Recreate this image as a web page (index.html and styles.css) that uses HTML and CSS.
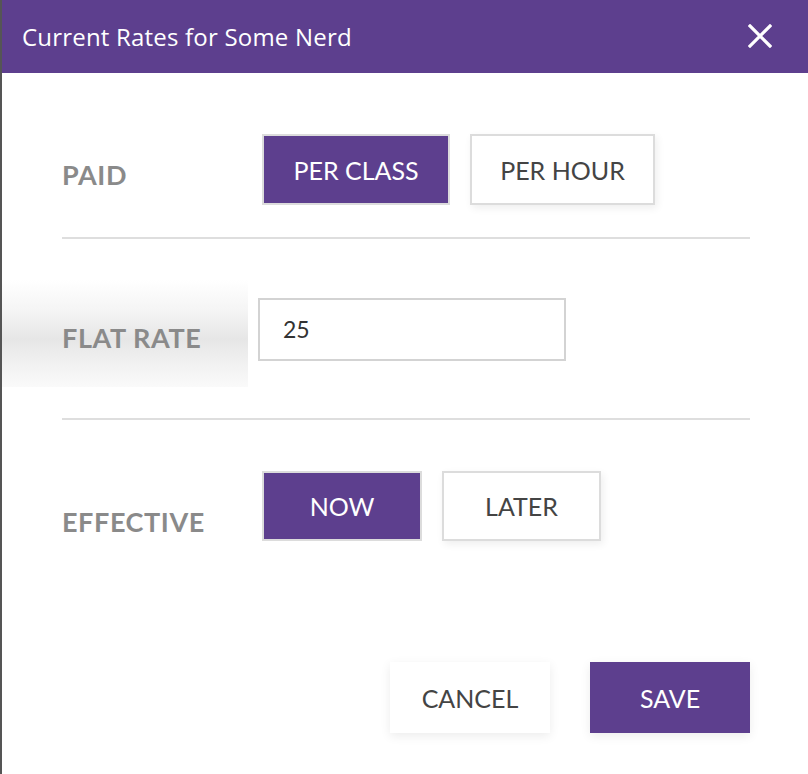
FILE: index.html
```html
<!DOCTYPE html>
<html>
<head>
<meta charset="utf-8">
<link rel="stylesheet" href="styles.css">
</head>
<body>
<div class="modal">
  <div class="header">
    <div class="title">Current Rates for Some Nerd</div>
    <svg class="close" width="24" height="24" viewBox="0 0 24 24">
      <path d="M2 2 L22 22 M22 2 L2 22" stroke="#fff" stroke-width="3.2" stroke-linecap="square" fill="none"/>
    </svg>
  </div>
  <div class="content">
    <div class="row row-paid">
      <div class="label label-paid">PAID</div>
      <div class="choices">
        <div class="btn btn-on btn-class">PER CLASS</div>
        <div class="btn btn-off btn-hour">PER HOUR</div>
      </div>
    </div>
    <div class="divider divider-1"></div>
    <div class="row row-rate">
      <div class="label label-rate">FLAT RATE</div>
      <div class="input">25</div>
    </div>
    <div class="divider divider-2"></div>
    <div class="row row-eff">
      <div class="label label-eff">EFFECTIVE</div>
      <div class="choices">
        <div class="btn btn-on btn-now">NOW</div>
        <div class="btn btn-off btn-later">LATER</div>
      </div>
    </div>
    <div class="footer">
      <div class="action action-cancel">CANCEL</div>
      <div class="action action-save">SAVE</div>
    </div>
  </div>
</div>
</body>
</html>
```
FILE: styles.css
```css
html, body {
  margin: 0;
  padding: 0;
  background: #fff;
}
body {
  width: 808px;
  height: 774px;
  overflow: hidden;
  font-family: "Lato", "Liberation Sans", sans-serif;
}
.modal {
  height: 774px;
  border-left: 2px solid #555555;
  background: #fff;
  box-sizing: border-box;
}
.header {
  height: 73px;
  background: #5d3f8e;
  display: flex;
  align-items: center;
  justify-content: space-between;
  padding: 0 36px 0 20px;
}
.title {
  color: #fff;
  font-family: "Open Sans", "Lato", sans-serif;
  font-size: 24px;
  line-height: 1;
  margin-top: 0;
  letter-spacing: 0.2px;
}
.close {
  display: block;
  margin-top: -2px;
}
.content {
  padding: 61px 58px 0 60px;
}
.row {
  display: flex;
  align-items: flex-start;
}
.label {
  width: 200px;
  flex: none;
  font-size: 27px;
  line-height: 27px;
  font-weight: 700;
  color: #8a8a8a;
  letter-spacing: 0.6px;
}
.label-paid { padding-top: 27px; }
.label-rate {
  margin: -18px 10px -26px -60px;
  padding: 44px 0 0 60px;
  width: 186px;
  height: 63px;
  background: linear-gradient(to bottom, #ffffff 0%, #f4f4f4 30%, #e6e6e6 55%, #f1f1f1 78%, #fafafa 100%);
}
.label-eff { padding-top: 37px; }
.choices {
  display: flex;
  gap: 20px;
}
.btn {
  box-sizing: border-box;
  display: flex;
  align-items: center;
  justify-content: center;
  font-size: 25px;
  border: 2px solid #dcdcdc;
}
.btn-on {
  background: #5d3f8e;
  color: #fff;
}
.btn-off {
  background: #fff;
  color: #444;
  box-shadow: 2px 3px 8px rgba(0,0,0,0.07);
}
.btn-class { width: 188px; height: 71px; }
.btn-hour { width: 185px; height: 71px; }
.btn-now { width: 160px; height: 70px; }
.btn-later { width: 159px; height: 70px; }
.divider {
  height: 2px;
  background: #dedede;
}
.divider-1 { margin-top: 32px; }
.divider-2 { margin-top: 57px; }
.row-rate { margin-top: 59px; }
.row-eff { margin-top: 51px; }
.input {
  box-sizing: border-box;
  width: 308px;
  height: 63px;
  border: 2px solid #d3d3d3;
  padding-left: 23px;
  font-size: 23px;
  color: #333;
  display: flex;
  align-items: center;
  padding-bottom: 2px;
}
.footer {
  margin-top: 121px;
  display: flex;
  justify-content: flex-end;
  gap: 40px;
}
.action {
  width: 160px;
  height: 71px;
  display: flex;
  align-items: center;
  justify-content: center;
  font-size: 25px;
  box-shadow: 0 3px 10px rgba(0,0,0,0.08);
}
.action-cancel {
  background: #fff;
  color: #444;
}
.action-save {
  background: #5d3f8e;
  color: #fff;
}
```
